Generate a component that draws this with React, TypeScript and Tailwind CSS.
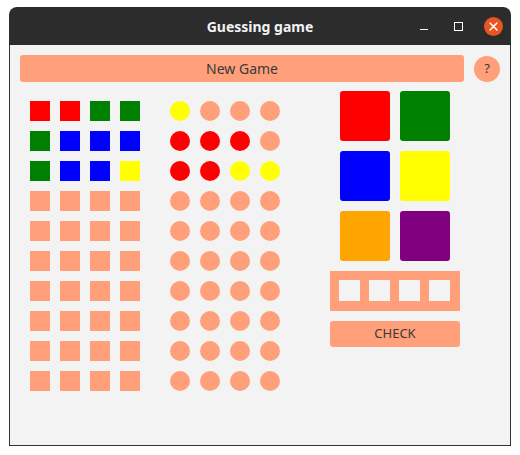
const SALMON = "bg-[#ffa07a]";

type Peg = "red" | "green" | "blue" | "yellow" | "orange" | "purple" | null;

const pegClass: Record<string, string> = {
  red: "bg-[#ff0000]",
  green: "bg-[#008000]",
  blue: "bg-[#0000ff]",
  yellow: "bg-[#ffff00]",
  orange: "bg-[#ffa500]",
  purple: "bg-[#800080]",
};

const guesses: Peg[][] = [
  ["red", "red", "green", "green"],
  ["green", "blue", "blue", "blue"],
  ["green", "blue", "blue", "yellow"],
];

const hints: Peg[][] = [
  ["yellow", null, null, null],
  ["red", "red", "red", null],
  ["red", "red", "yellow", "yellow"],
];

const ROWS = 10;

function fill(rows: Peg[][]) {
  const out: Peg[] = [];
  for (let r = 0; r < ROWS; r++) {
    for (let c = 0; c < 4; c++) out.push(rows[r]?.[c] ?? null);
  }
  return out;
}

const palette: Peg[] = ["red", "green", "blue", "yellow", "orange", "purple"];

function TitleBar() {
  return (
    <div className="relative flex h-[38px] items-center justify-center rounded-t-[8px] bg-[#2c2c2c]">
      <span className="text-[14px] font-bold text-[#f2f2f2]">Guessing game</span>
      <div className="absolute right-[8px] top-0 flex h-full items-center">
        {/* minimize */}
        <div className="flex h-[20px] w-[34px] items-center justify-center">
          <div className="mt-[6px] h-[1px] w-[8px] bg-white" />
        </div>
        {/* maximize */}
        <div className="flex h-[20px] w-[34px] items-center justify-center">
          <div className="h-[9px] w-[9px] border border-white" />
        </div>
        {/* close */}
        <div className="ml-[9px] flex h-[19px] w-[19px] items-center justify-center rounded-full bg-[#e95420]">
          <svg width="9" height="9" viewBox="0 0 9 9">
            <path d="M1 1L8 8M8 1L1 8" stroke="white" strokeWidth="1.5" strokeLinecap="round" />
          </svg>
        </div>
      </div>
    </div>
  );
}

export default function App() {
  const guessCells = fill(guesses);
  const hintCells = fill(hints);

  return (
    <div
      className="h-[455px] w-[520px] bg-white pl-[9px] pt-[7px]"
      style={{ fontFamily: '"Noto Sans", "DejaVu Sans", sans-serif' }}
    >
      <div className="flex h-[439px] w-[502px] flex-col">
        <TitleBar />

        <div className="flex-1 border-x border-b border-[#333333] bg-[#f3f3f3] px-[10px] pt-[10px]">
          <div className="flex h-[27px] items-center gap-[10px]">
            <button
              className={`h-full w-[445px] rounded-[3px] ${SALMON} text-[14px] text-[#3a3a3a]`}
            >
              New Game
            </button>
            <button
              className={`h-[26px] w-[26px] rounded-full ${SALMON} text-[13px] text-[#3a3a3a]`}
            >
              ?
            </button>
          </div>

          <div className="flex">
            <div className="ml-[10px] mt-[19px] grid grid-cols-4 gap-[10px] self-start">
              {guessCells.map((p, i) => (
                <div key={i} className={`h-[20px] w-[20px] ${p ? pegClass[p] : SALMON}`} />
              ))}
            </div>

            <div className="ml-[30px] mt-[19px] grid grid-cols-4 gap-[10px] self-start">
              {hintCells.map((p, i) => (
                <div
                  key={i}
                  className={`h-[20px] w-[20px] rounded-full ${p ? pegClass[p] : SALMON}`}
                />
              ))}
            </div>

            <div className="ml-[50px] mt-[9px] flex w-[130px] flex-col gap-[10px]">
              <div className="grid grid-cols-2 gap-[10px] px-[10px]">
                {palette.map((p, i) => (
                  <div key={i} className={`h-[50px] w-[50px] rounded-[3px] ${pegClass[p!]}`} />
                ))}
              </div>

              <div className={`flex h-[40px] gap-[9px] pl-[9px] pt-[9px] ${SALMON}`}>
                {[0, 1, 2, 3].map((i) => (
                  <div key={i} className="h-[21px] w-[21px] bg-[#f3f3f3]" />
                ))}
              </div>

              <button
                className={`h-[26px] w-full rounded-[3px] ${SALMON} text-[13px] text-[#3a3a3a]`}
              >
                CHECK
              </button>
            </div>
          </div>
        </div>
      </div>
    </div>
  );
}
